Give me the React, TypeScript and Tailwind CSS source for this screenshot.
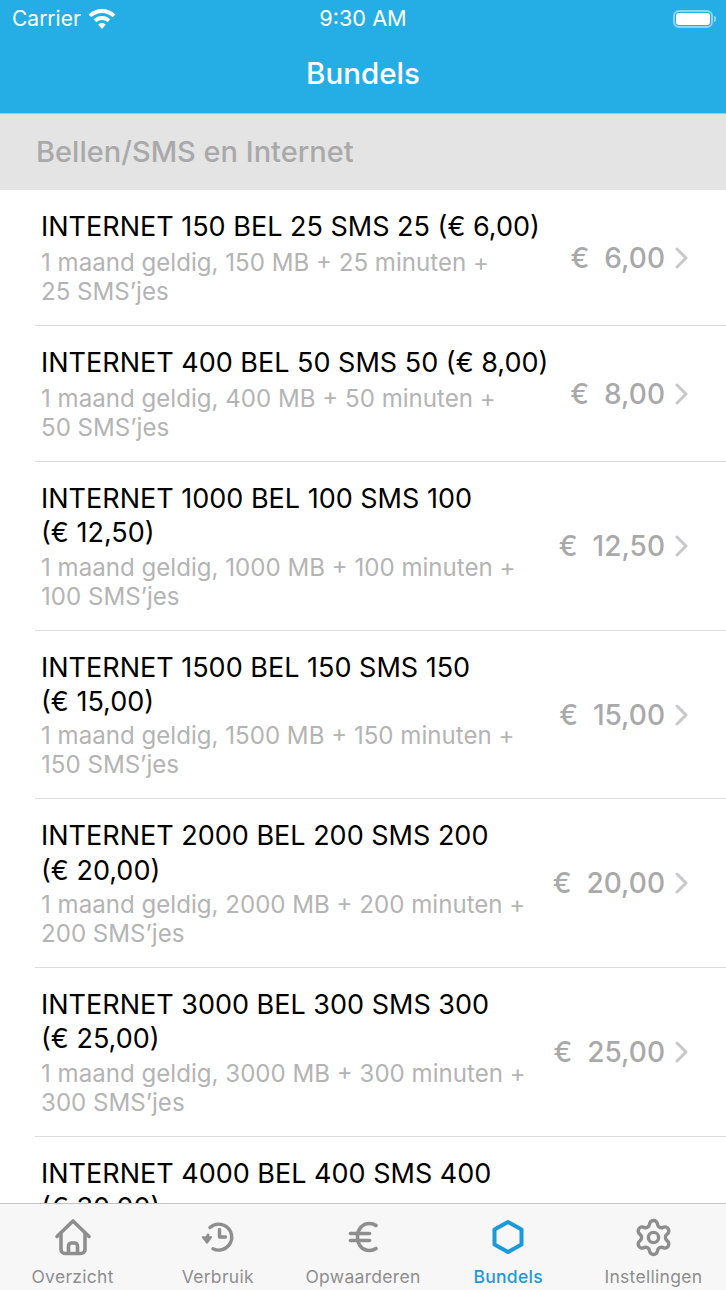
import React from 'react';
import { Settings } from 'lucide-react';

interface Bundle {
  title: string;
  second?: string;
  sub1: string;
  sub2: string;
  price: string;
}

const bundles: Bundle[] = [
  { title: 'INTERNET 150 BEL 25 SMS 25 (€ 6,00)', sub1: '1 maand geldig, 150 MB + 25 minuten +', sub2: '25 SMS’jes', price: '€ 6,00' },
  { title: 'INTERNET 400 BEL 50 SMS 50 (€ 8,00)', sub1: '1 maand geldig, 400 MB + 50 minuten +', sub2: '50 SMS’jes', price: '€ 8,00' },
  { title: 'INTERNET 1000 BEL 100 SMS 100', second: '(€ 12,50)', sub1: '1 maand geldig, 1000 MB + 100 minuten +', sub2: '100 SMS’jes', price: '€ 12,50' },
  { title: 'INTERNET 1500 BEL 150 SMS 150', second: '(€ 15,00)', sub1: '1 maand geldig, 1500 MB + 150 minuten +', sub2: '150 SMS’jes', price: '€ 15,00' },
  { title: 'INTERNET 2000 BEL 200 SMS 200', second: '(€ 20,00)', sub1: '1 maand geldig, 2000 MB + 200 minuten +', sub2: '200 SMS’jes', price: '€ 20,00' },
  { title: 'INTERNET 3000 BEL 300 SMS 300', second: '(€ 25,00)', sub1: '1 maand geldig, 3000 MB + 300 minuten +', sub2: '300 SMS’jes', price: '€ 25,00' },
  { title: 'INTERNET 4000 BEL 400 SMS 400', second: '(€ 30,00)', sub1: '1 maand geldig, 4000 MB + 400 minuten +', sub2: '400 SMS’jes', price: '€ 30,00' },
];

const HomeIcon = () => (
  <svg width="38" height="38" viewBox="0 0 38 38" fill="none" stroke="currentColor" strokeWidth="3.600" strokeLinecap="round" strokeLinejoin="round">
    <path d="M3 18.500 19 3l16 15.500" />
    <path d="M7 15v16.500a4 4 0 0 0 4 4h16a4 4 0 0 0 4-4V15" />
    <path d="M14.500 35v-7a3 3 0 0 1 3-3h3a3 3 0 0 1 3 3v7" />
  </svg>
);

const HistoryIcon = () => (
  <svg width="34" height="32" viewBox="0 0 34 32" fill="none" stroke="currentColor" strokeWidth="3.400" strokeLinecap="round" strokeLinejoin="round">
    <path d="M9 6.500A13 13 0 1 1 12 27.800" />
    <path d="M18.500 8.500v7.500h6" />
    <path d="M1.500 16h9L6 22z" fill="currentColor" strokeWidth="1.500" />
    <path d="M6 20c0-2 .2-4 1-6" strokeWidth="3" />
  </svg>
);

const EuroIcon = () => (
  <svg width="30" height="32" viewBox="0 0 30 32" fill="none" stroke="currentColor" strokeWidth="3.600" strokeLinecap="round">
    <path d="M28 4.500C26 3 24 2.500 21.500 2.500 14.500 2.500 9.500 8 9.500 16s5 13.500 12 13.500c2.500 0 4.500-.5 6.500-2" />
    <path d="M2.500 12.500h19" />
    <path d="M2.500 19.500h19" />
  </svg>
);

const HexIcon = () => (
  <svg width="34" height="36" viewBox="0 0 34 36" fill="none" stroke="currentColor" strokeWidth="4" strokeLinejoin="round">
    <path d="M17 3 30.500 10.500v15L17 33 3.500 25.500v-15z" />
  </svg>
);

const Row: React.FC<{ bundle: Bundle }> = ({ bundle }) => (
  <div className="pl-[35px]">
    <div className="flex items-center border-b border-[#dcdcdc] pb-[19px] pl-[6px] pr-[38px] pt-[21px]">
      <div className="min-w-0 flex-1">
        <div className="whitespace-nowrap text-[27px] leading-[32.67px] text-black">{bundle.title}</div>
        {bundle.second && <div className="mb-[-1.5px] pt-[1.5px] text-[27px] leading-[32.67px] text-black">{bundle.second}</div>}
        <div className="mt-[4.33px] whitespace-nowrap text-[24.100px] leading-[29px] text-[#b4b4b4]">{bundle.sub1}</div>
        <div className="whitespace-nowrap text-[24.100px] leading-[29px] text-[#b4b4b4]">{bundle.sub2}</div>
      </div>
      <div className="mb-[2px] flex items-center gap-[10px]">
        <span className="whitespace-pre text-[28px] font-medium text-[#a9a9a9]">{bundle.price.replace(' ', '  ')}</span>
        <svg width="13" height="22" viewBox="0 0 13 22" fill="none" stroke="#c7c7cc" strokeWidth="3" strokeLinecap="round" strokeLinejoin="round">
          <path d="M2 2l9 9-9 9" />
        </svg>
      </div>
    </div>
  </div>
);

const Tab: React.FC<{ label: string; active?: boolean; children: React.ReactNode }> = ({ label, active, children }) => (
  <div className={`flex flex-1 flex-col items-center ${active ? 'text-[#1b9ad9]' : 'text-[#8e8e8e]'}`}>
    <div className="flex h-[38px] items-center justify-center">{children}</div>
    <span className={`mt-[10px] whitespace-nowrap text-[17.500px] leading-[22px] tracking-[0.3px] ${active ? 'font-medium' : ''}`}>{label}</span>
  </div>
);

export default function App() {
  return (
    <div className="flex h-[1290px] w-[726px] flex-col overflow-hidden bg-white font-['Inter',sans-serif]">
      <div className="h-[113px] shrink-0 bg-[#25aee6] text-white">
        <div className="relative flex h-[37px] items-center pl-[12px] pr-[10px]">
          <span className="text-[21px]">Carrier</span>
          <svg className="ml-[7px]" width="28" height="20" viewBox="0 0 28 20" fill="white">
            <path d="M14 0C8.800 0 4.200 2 .6 5.400l2.700 2.900C6.100 5.600 9.900 4 14 4s7.900 1.600 10.700 4.300l2.700-2.900C23.800 2 19.200 0 14 0Z" />
            <path d="M14 7c-3.200 0-6.100 1.200-8.300 3.300l2.700 2.900C9.900 11.800 11.800 11 14 11s4.100.8 5.600 2.200l2.700-2.900C20.100 8.200 17.200 7 14 7Z" />
            <path d="M14 14c-1.500 0-2.800.6-3.800 1.500L14 20l3.800-4.500c-1-.9-2.300-1.500-3.800-1.500Z" />
          </svg>
          <span className="absolute left-0 right-0 text-center text-[21.700px]">9:30 AM</span>
          <div className="ml-auto flex items-center">
            <div className="h-[18px] w-[40px] rounded-[6px] border-2 border-[#8fd5f3] p-[1px]">
              <div className="h-full w-full rounded-[3px] bg-white" />
            </div>
            <div className="ml-[1px] h-[6px] w-[2px] rounded-r bg-[#8fd5f3]" />
          </div>
        </div>
        <div className="text-center text-[29.500px] font-medium leading-[73px]">Bundels</div>
      </div>

      <div className="flex h-[77px] shrink-0 items-center border-t border-[#b5bcc2] bg-[#e4e4e4] pl-[36px] text-[29px] font-medium text-[#a9a9a9]">
        Bellen/SMS en Internet
      </div>

      <div className="min-h-0 flex-1 overflow-hidden">
        {bundles.map((b) => (
          <Row key={b.title} bundle={b} />
        ))}
      </div>

      <div className="flex h-[87px] shrink-0 border-t border-[#c4c4c4] bg-[#f7f7f8] pt-[14px]">
        <Tab label="Overzicht"><HomeIcon /></Tab>
        <Tab label="Verbruik"><HistoryIcon /></Tab>
        <Tab label="Opwaarderen"><EuroIcon /></Tab>
        <Tab label="Bundels" active><HexIcon /></Tab>
        <Tab label="Instellingen"><Settings size={41} strokeWidth={2} /></Tab>
      </div>
    </div>
  );
}
